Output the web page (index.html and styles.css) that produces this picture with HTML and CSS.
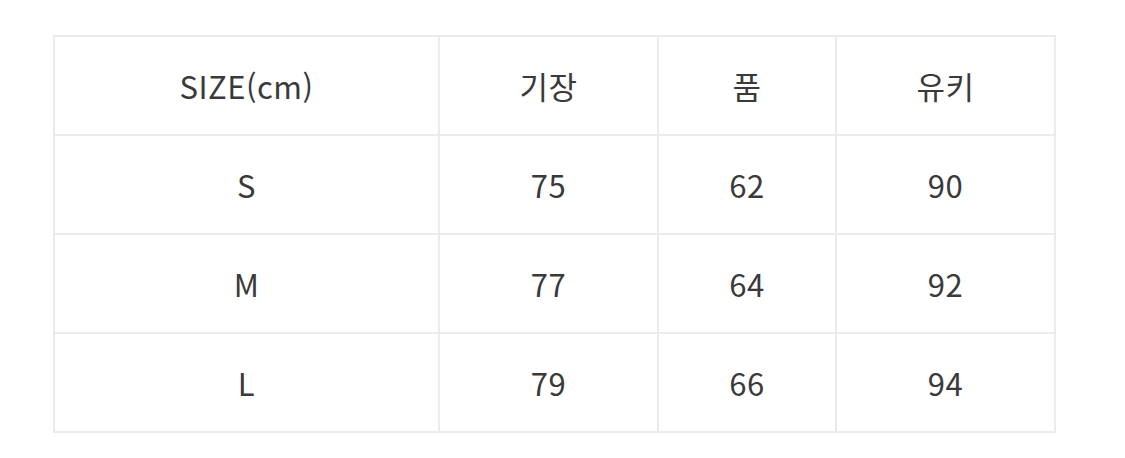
FILE: index.html
```html
<!DOCTYPE html>
<html lang="ko">
<head>
<meta charset="utf-8">
<link rel="stylesheet" href="styles.css">
</head>
<body>
<div class="wrap">
<table class="size">
<colgroup><col class="c1"><col class="c2"><col class="c3"><col class="c4"></colgroup>
<tr><td>SIZE(cm)</td><td>기장</td><td>품</td><td>유키</td></tr>
<tr><td>S</td><td>75</td><td>62</td><td>90</td></tr>
<tr><td>M</td><td>77</td><td>64</td><td>92</td></tr>
<tr><td>L</td><td>79</td><td>66</td><td>94</td></tr>
</table>
</div>
</body>
</html>
```
FILE: styles.css
```css
html, body { margin: 0; padding: 0; background: #fff; }
.wrap { padding: 35px 0 0 53px; }
.size {
  border-collapse: collapse;
  width: 1001px;
  table-layout: fixed;
  font-family: "Noto Sans CJK KR", "Noto Sans", sans-serif;
  font-size: 31px;
  font-weight: 400;
  letter-spacing: 0.5px;
  color: #3a3a3a;
}
.c1 { width: 385px; }
.c2 { width: 219px; }
.c3 { width: 178px; }
.c4 { width: 219px; }
.size td {
  border: 2px solid #ebebeb;
  height: 97px;
  padding: 0;
  text-align: center;
  vertical-align: middle;
  line-height: 1;
}
```
